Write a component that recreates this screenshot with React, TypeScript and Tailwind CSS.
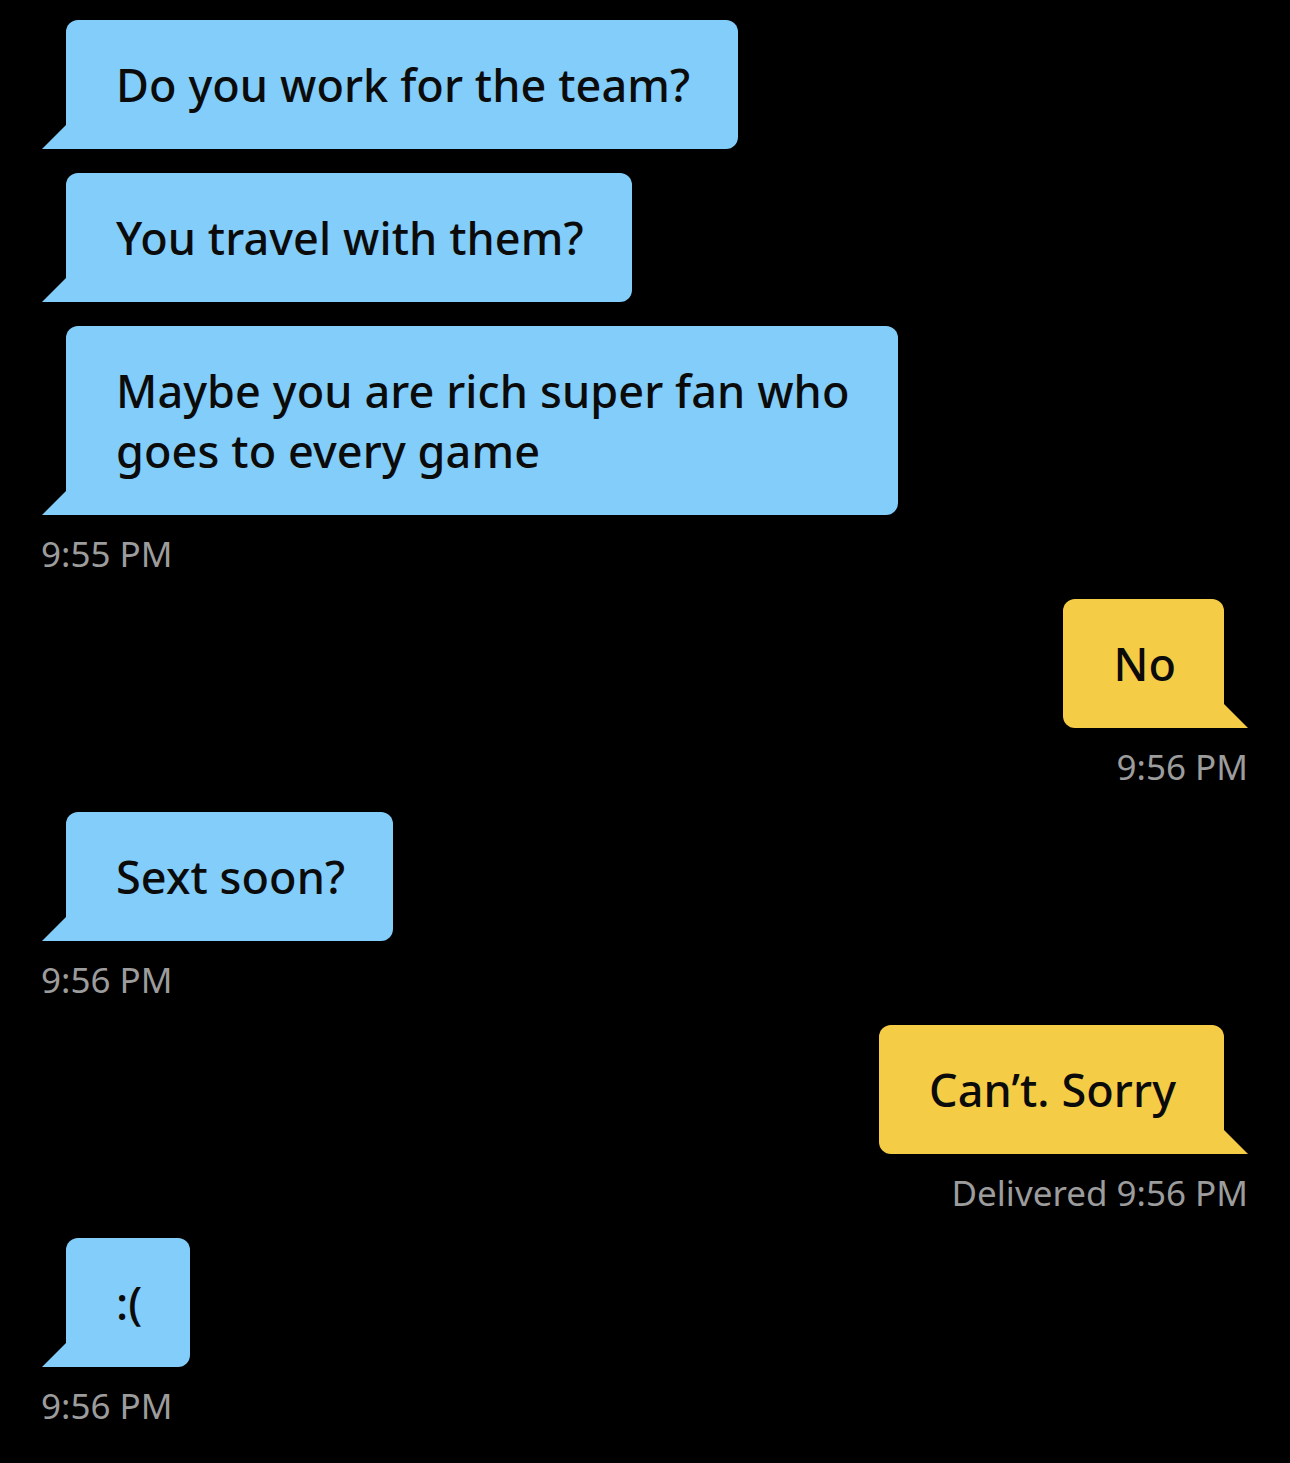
const font = { fontFamily: '"Noto Sans", "Open Sans", sans-serif' };

type Msg = { side: 'in' | 'out'; lines: string[][]; time: string };

const groups: Msg[] = [
  { side: 'in', lines: [['Do you work for the team?'], ['You travel with them?'], ['Maybe you are rich super fan who', 'goes to every game']], time: '9:55 PM' },
  { side: 'out', lines: [['No']], time: '9:56 PM' },
  { side: 'in', lines: [['Sext soon?']], time: '9:56 PM' },
  { side: 'out', lines: [['Can\u2019t. Sorry']], time: 'Delivered 9:56 PM' },
  { side: 'in', lines: [[':(']], time: '9:56 PM' },
];

function Bubble({ side, text }: { side: 'in' | 'out'; text: string[] }) {
  const incoming = side === 'in';
  return (
    <div className={incoming ? 'relative self-start ml-[24px]' : 'relative self-end mr-[24px]'}>
      <div
        className={
          incoming
            ? 'rounded-[12px] rounded-bl-none bg-[#82cdf9] pl-[50px] pr-[48px] pt-[35px] pb-[34px] text-[45px] leading-[60px] tracking-[0.1px] font-medium text-[#0b0b0b]'
            : 'rounded-[12px] rounded-br-none bg-[#f5cc46] pl-[50px] pr-[48px] pt-[35px] pb-[34px] text-[45px] leading-[60px] tracking-[0.1px] font-medium text-[#0b0b0b]'
        }
      >
        {text.map((t, i) => (
          <div key={i} className="whitespace-nowrap">{t}</div>
        ))}
      </div>
      {incoming ? (
        <span className="absolute bottom-0 left-[-24px] h-[24px] w-[24px] bg-[#82cdf9] [clip-path:polygon(100%_0,100%_100%,0_100%)]" />
      ) : (
        <span className="absolute bottom-0 right-[-24px] h-[24px] w-[24px] bg-[#f5cc46] [clip-path:polygon(0_0,100%_100%,0_100%)]" />
      )}
    </div>
  );
}

export default function App() {
  return (
    <div className="min-h-[1463px] w-[1290px] bg-black px-[42px] pt-[20px]" style={font}>
      {groups.map((g, gi) => (
        <div key={gi} className="mb-[25px] flex flex-col">
          <div className="flex flex-col gap-[24px]">
            {g.lines.map((l, li) => (
              <Bubble key={li} side={g.side} text={l} />
            ))}
          </div>
          <div
            className={
              g.side === 'in'
                ? 'mt-[19px] -ml-[1px] h-[40px] text-left text-[35px] leading-[40px] text-[#9c9c9c]'
                : 'mt-[19px] h-[40px] text-right text-[35px] leading-[40px] text-[#9c9c9c]'
            }
          >
            {g.time}
          </div>
        </div>
      ))}
    </div>
  );
}
